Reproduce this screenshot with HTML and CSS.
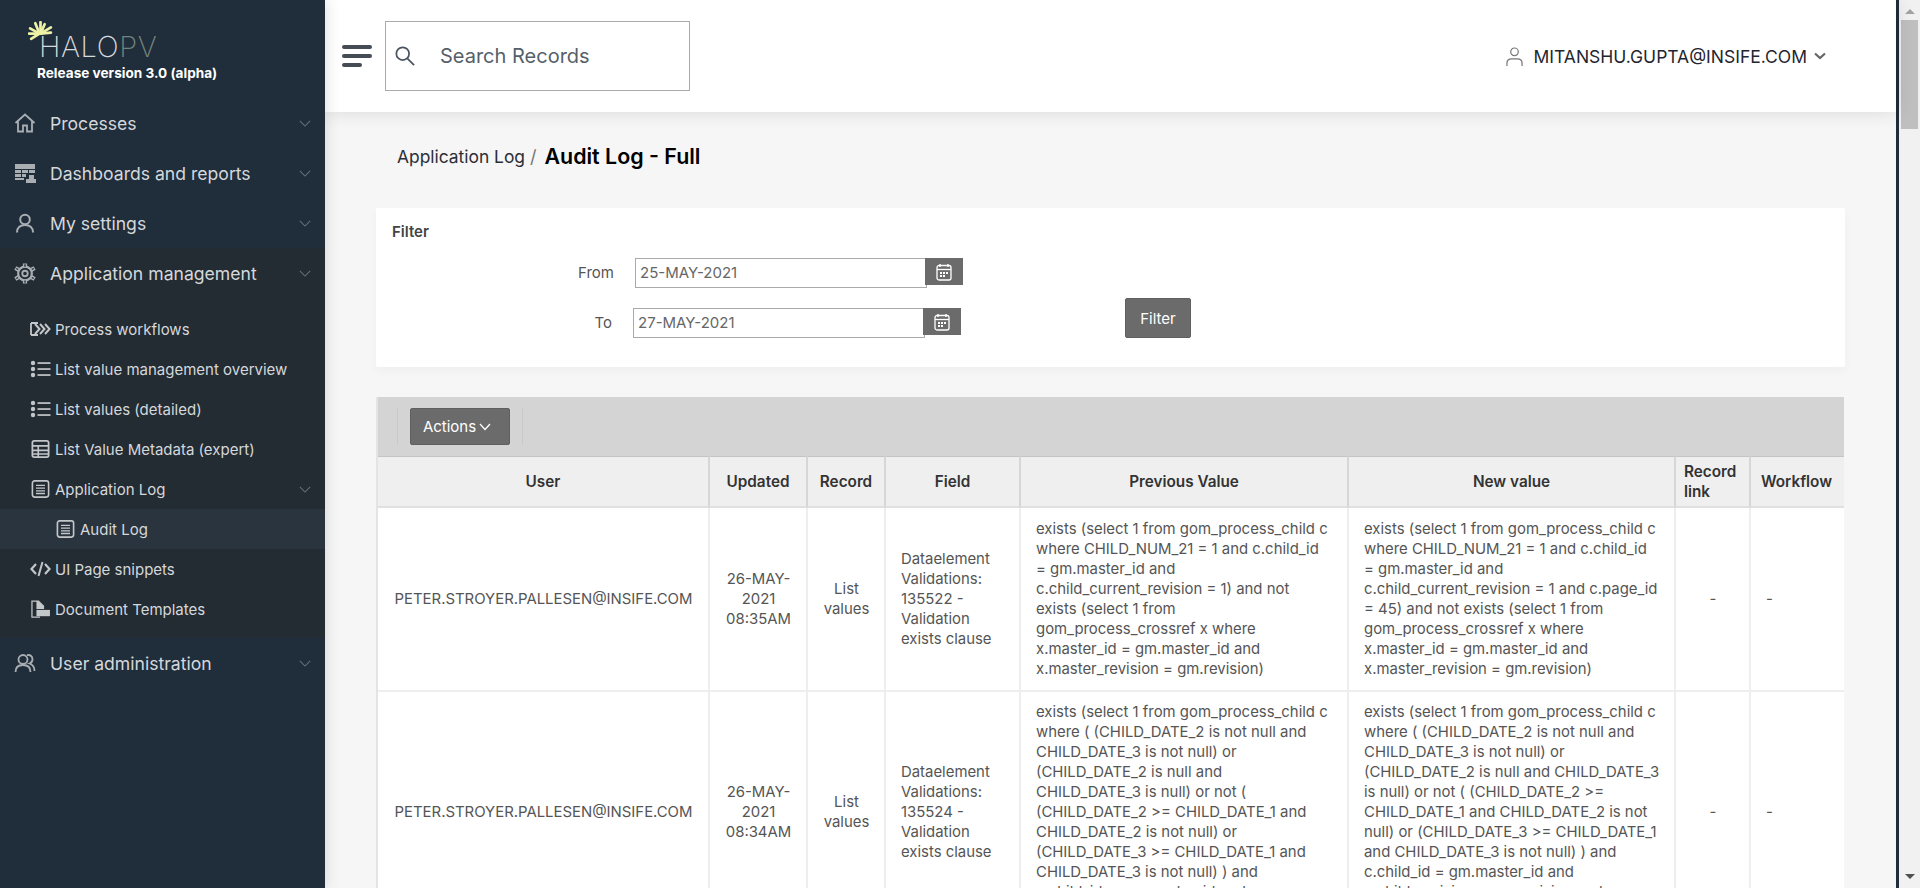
FILE: index.html
```html
<!DOCTYPE html>
<html lang="en">
<head>
    <meta charset="UTF-8">
    <meta name="viewport" content="width=device-width, initial-scale=1.0">
    <title>Audit Log - Full</title>
    <link rel="stylesheet" href="styles.css">
</head>
<body>
<svg class="defs" width="0" height="0">
    <symbol id="chev" viewBox="0 0 14 8"><path d="M1 1l6 6 6-6" fill="none" stroke="currentColor" stroke-width="1.2"/></symbol>
    <symbol id="list" viewBox="0 0 20 18"><g fill="currentColor"><circle cx="2.5" cy="3" r="2.2"/><circle cx="2.5" cy="9" r="2.2"/><circle cx="2.5" cy="15" r="2.2"/><rect x="7" y="2.2" width="13" height="1.7"/><rect x="7" y="8.2" width="13" height="1.7"/><rect x="7" y="14.2" width="13" height="1.7"/></g></symbol>
    <symbol id="log" viewBox="0 0 20 20"><rect x="1" y="1" width="18" height="18" rx="2.5" fill="none" stroke="currentColor" stroke-width="1.8"/><path d="M5 6h10M5 9h10M5 12h10M5 15h10" stroke="currentColor" stroke-width="1.5"/></symbol>
    <symbol id="cal" viewBox="0 0 16 18"><path d="M4 1v3M12 1v3" stroke="#fff" stroke-width="1.4"/><rect x="1" y="2.5" width="14" height="14.5" rx="2" fill="none" stroke="#fff" stroke-width="1.3"/><path d="M1 6.5h14" stroke="#fff" stroke-width="1.3"/><path d="M4 9h2v2H4zM7 9h2v2H7zM10 9h2v2h-2zM4 12h2v2H4zM7 12h2v2H7z" fill="#fff"/></symbol>
</svg>

<div class="app">
    <aside class="sidebar">
        <div class="brand">
            <svg class="sun" viewBox="0 0 24 20"><g stroke="#eef3a6" stroke-width="2.6" stroke-linecap="round"><path d="M11 12L2 7"/><path d="M11 12L1 12"/><path d="M11 12L3 17"/><path d="M11 12L7 2"/><path d="M12 12L12 1"/><path d="M12 12L16 3"/><path d="M12 12L22 6"/><path d="M12 12L22 11"/></g></svg>
            <div class="logo">HALO<span>PV</span></div>
            <div class="release">Release version 3.0 (alpha)</div>
        </div>

        <nav>
            <a class="nav-item">
                <svg class="nav-icon" viewBox="0 0 22 20"><path d="M1.5 10L11 1.5 20.5 10M4 8v10.5h5v-6h4v6h5V8" fill="none" stroke="currentColor" stroke-width="1.8"/></svg>
                <span>Processes</span>
                <svg class="chev"><use href="#chev"/></svg>
            </a>
            <a class="nav-item">
                <svg class="nav-icon" viewBox="0 0 22 20"><path d="M1 1h20v5H1zM1 7h6v3H1zM1 11h6v3H1zM1 15h9v2H1zM8 7h6v3H8zM8 11h4v3H8zM15 7h6v3h-6zM12 16h10v4H12zM15 12h5v5h-5z" fill="currentColor"/></svg>
                <span>Dashboards and reports</span>
                <svg class="chev"><use href="#chev"/></svg>
            </a>
            <a class="nav-item">
                <svg class="nav-icon" viewBox="0 0 22 20"><circle cx="11" cy="6.500" r="4.800" fill="none" stroke="currentColor" stroke-width="2"/><path d="M3 19.500c0-5 3.500-7.500 8-7.500s8 2.500 8 7.500" fill="none" stroke="currentColor" stroke-width="2"/></svg>
                <span>My settings</span>
                <svg class="chev"><use href="#chev"/></svg>
            </a>

            <div class="nav-group">
                <a class="nav-item">
                    <svg class="nav-icon gear" viewBox="0 0 24 24"><circle cx="12" cy="12" r="3" fill="none" stroke="currentColor" stroke-width="2"/><circle cx="12" cy="12" r="7.500" fill="none" stroke="currentColor" stroke-width="2.400"/><path d="M12 1v4.500M12 18.500V23M1.500 6l4 2.300M18.500 15.700l4 2.300M1.500 18l4-2.300M18.500 8.300l4-2.300" stroke="currentColor" stroke-width="4.600"/><path d="M12 2v2.500M12 19.500V22M2.500 6.500l2 1.200M19.500 16.300l2 1.200M2.500 17.500l2-1.200M19.500 7.700l2-1.200" stroke="#232b33" stroke-width="1.400"/></svg>
                    <span>Application management</span>
                    <svg class="chev"><use href="#chev"/></svg>
                </a>
                <div class="sub-list">
                    <a class="sub-item">
                        <svg class="sub-icon" viewBox="0 0 21 14"><path d="M1 1h7M1 13h7M1 1v12" fill="none" stroke="currentColor" stroke-width="1.800"/><path d="M5 2l4.500 5L5 12M10 2l4.500 5L10 12M15 2l4.500 5L15 12" fill="none" stroke="currentColor" stroke-width="2"/></svg>
                        <span>Process workflows</span>
                    </a>
                    <a class="sub-item"><svg class="sub-icon"><use href="#list"/></svg><span>List value management overview</span></a>
                    <a class="sub-item"><svg class="sub-icon"><use href="#list"/></svg><span>List values (detailed)</span></a>
                    <a class="sub-item">
                        <svg class="sub-icon" viewBox="0 0 20 20"><rect x="1" y="1" width="18" height="18" rx="2" fill="none" stroke="currentColor" stroke-width="2"/><path d="M1 6.500h18M1 11.500h18M1 15.500h18M7.500 6v13" stroke="currentColor" stroke-width="1.800"/></svg>
                        <span>List Value Metadata (expert)</span>
                    </a>
                    <a class="sub-item">
                        <svg class="sub-icon"><use href="#log"/></svg>
                        <span>Application Log</span>
                        <svg class="chev"><use href="#chev"/></svg>
                    </a>
                    <a class="sub-item sub-current"><svg class="sub-icon"><use href="#log"/></svg><span>Audit Log</span></a>
                    <a class="sub-item">
                        <svg class="sub-icon" viewBox="0 0 21 16"><path d="M6 3L1.500 8 6 13M15 3l4.500 5-4.500 5" fill="none" stroke="currentColor" stroke-width="2.200"/><path d="M12.500 1L8.500 15" stroke="currentColor" stroke-width="2"/></svg>
                        <span>UI Page snippets</span>
                    </a>
                    <a class="sub-item">
                        <svg class="sub-icon" viewBox="0 0 21 20"><path d="M9 1.200H1V19h9" fill="none" stroke="currentColor" stroke-width="1.400"/><path d="M9 1l5.500 5.500V10H6V1z" fill="currentColor"/><rect x="6" y="11" width="15" height="7" fill="currentColor"/></svg>
                        <span>Document Templates</span>
                    </a>
                </div>
            </div>

            <a class="nav-item">
                <svg class="nav-icon" viewBox="0 0 22 20"><circle cx="9" cy="6.500" r="4.500" fill="none" stroke="currentColor" stroke-width="1.800"/><path d="M1.500 19c0-5 3-7 7.500-7s7.500 2 7.500 7M13 2.200c3-.8 5.500 1 5.500 4 0 2.300-1.500 3.800-3 4.300 3 1 5 3 5 7.500" fill="none" stroke="currentColor" stroke-width="1.800"/></svg>
                <span>User administration</span>
                <svg class="chev"><use href="#chev"/></svg>
            </a>
        </nav>
    </aside>

    <div class="main">
        <header class="topbar">
            <div class="burger"><i></i><i></i><i></i></div>
            <div class="search">
                <svg class="search-icon" viewBox="0 0 22 22"><circle cx="8.500" cy="8.500" r="7" fill="none" stroke="#4b545e" stroke-width="1.900"/><path d="M13.500 13.500L21 21" stroke="#4b545e" stroke-width="1.900"/></svg>
                <span>Search Records</span>
            </div>
            <div class="user-menu">
                <svg class="user-icon" viewBox="0 0 18 20"><circle cx="9" cy="5" r="4" fill="none" stroke="#777" stroke-width="1.300"/><path d="M1 20v-3c0-3 2-4.500 5-4.500h6c3 0 5 1.500 5 4.500v3" fill="none" stroke="#777" stroke-width="1.300"/></svg>
                <span>MITANSHU.GUPTA@INSIFE.COM</span>
                <svg class="user-chev" viewBox="0 0 12 8"><path d="M1 1.500l5 4.500 5-4.500" fill="none" stroke="#666" stroke-width="2.200"/></svg>
            </div>
        </header>

        <div class="content">
            <div class="breadcrumb">
                <span class="crumb">Application Log</span>
                <span class="crumb-sep">/</span>
                <span class="crumb-now">Audit Log - Full</span>
            </div>

            <section class="filter-card">
                <h4>Filter</h4>
                <div class="filter-body">
                    <div class="filter-rows">
                        <div class="filter-row row-from">
                            <label>From</label>
                            <div class="date-input">25-MAY-2021</div>
                            <div class="date-btn"><svg viewBox="0 0 16 18"><use href="#cal"/></svg></div>
                        </div>
                        <div class="filter-row row-to">
                            <label>To</label>
                            <div class="date-input">27-MAY-2021</div>
                            <div class="date-btn"><svg viewBox="0 0 16 18"><use href="#cal"/></svg></div>
                        </div>
                    </div>
                    <button class="btn btn-filter">Filter</button>
                </div>
            </section>

            <section class="report">
                <div class="toolbar">
                    <div class="toolbar-group">
                        <button class="btn btn-actions">Actions <svg viewBox="0 0 12 8"><path d="M1 1l5 5.500L11 1" fill="none" stroke="#fff" stroke-width="1.300"/></svg></button>
                    </div>
                </div>
                <table>
                    <colgroup>
                        <col class="c-user"><col class="c-updated"><col class="c-record"><col class="c-field">
                        <col class="c-prev"><col class="c-new"><col class="c-link"><col class="c-flow">
                    </colgroup>
                    <thead>
                        <tr>
                            <th>User</th>
                            <th>Updated</th>
                            <th>Record</th>
                            <th>Field</th>
                            <th>Previous Value</th>
                            <th>New value</th>
                            <th class="th-link"><span>Record link</span></th>
                            <th class="th-flow">Workflow</th>
                        </tr>
                    </thead>
                    <tbody>
                        <tr>
                            <td class="center">PETER.STROYER.PALLESEN@INSIFE.COM</td>
                            <td class="center">26-MAY-2021 08:35AM</td>
                            <td class="center">List values</td>
                            <td>Dataelement Validations: 135522 - Validation exists clause</td>
                            <td class="sql">exists (select 1 from gom_process_child c<br>where CHILD_NUM_21 = 1 and c.child_id<br>= gm.master_id and<br>c.child_current_revision = 1) and not<br>exists (select 1 from<br>gom_process_crossref x where<br>x.master_id = gm.master_id and<br>x.master_revision = gm.revision)</td>
                            <td class="sql">exists (select 1 from gom_process_child c<br>where CHILD_NUM_21 = 1 and c.child_id<br>= gm.master_id and<br>c.child_current_revision = 1 and c.page_id<br>= 45) and not exists (select 1 from<br>gom_process_crossref x where<br>x.master_id = gm.master_id and<br>x.master_revision = gm.revision)</td>
                            <td class="center">-</td>
                            <td>-</td>
                        </tr>
                        <tr>
                            <td class="center">PETER.STROYER.PALLESEN@INSIFE.COM</td>
                            <td class="center">26-MAY-2021 08:34AM</td>
                            <td class="center">List values</td>
                            <td>Dataelement Validations: 135524 - Validation exists clause</td>
                            <td class="sql">exists (select 1 from gom_process_child c<br>where ( (CHILD_DATE_2 is not null and<br>CHILD_DATE_3 is not null) or<br>(CHILD_DATE_2 is null and<br>CHILD_DATE_3 is null) or not (<br>(CHILD_DATE_2 &gt;= CHILD_DATE_1 and<br>CHILD_DATE_2 is not null) or<br>(CHILD_DATE_3 &gt;= CHILD_DATE_1 and<br>CHILD_DATE_3 is not null) ) and<br>c.child_id = gm.master_id and<br>c.child_revision = gm.revision</td>
                            <td class="sql">exists (select 1 from gom_process_child c<br>where ( (CHILD_DATE_2 is not null and<br>CHILD_DATE_3 is not null) or<br>(CHILD_DATE_2 is null and CHILD_DATE_3<br>is null) or not ( (CHILD_DATE_2 &gt;=<br>CHILD_DATE_1 and CHILD_DATE_2 is not<br>null) or (CHILD_DATE_3 &gt;= CHILD_DATE_1<br>and CHILD_DATE_3 is not null) ) and<br>c.child_id = gm.master_id and<br>c.child_revision = gm.revision and<br>c.page_id = 45)</td>
                            <td class="center">-</td>
                            <td>-</td>
                        </tr>
                    </tbody>
                </table>
            </section>
        </div>
    </div>

    <div class="edge"></div>
    <div class="scrollbar">
        <div class="arrow-up"></div>
        <div class="thumb"></div>
        <div class="arrow-down"></div>
    </div>
</div>
</body>
</html>
```

FILE: styles.css
```css
* {
    box-sizing: border-box;
}

html, body {
    height: 100%;
    margin: 0;
    overflow: hidden;
}

body {
    font-family: 'Inter', 'Liberation Sans', sans-serif;
    font-size: 15px;
    color: #555;
    background-color: #f6f6f6;
}

.defs {
    position: absolute;
}

.app {
    display: flex;
    height: 888px;
    overflow: hidden;
}

/* sidebar */
.sidebar {
    width: 325px;
    flex-shrink: 0;
    background-color: #202d3b;
    color: #d5d8db;
    box-shadow: 0 0 14px rgba(0, 0, 0, 0.15);
    position: relative;
    z-index: 2;
}

.brand {
    height: 98px;
    padding: 22px 0 0 37px;
    position: relative;
}

.sun {
    position: absolute;
    left: 28px;
    top: 21px;
    width: 25px;
    height: 21px;
}

.logo {
    font-size: 29px;
    font-weight: 200;
    line-height: 30px;
    letter-spacing: 0.6px;
    padding: 10px 0 0 2px;
    color: #d6dadd;
}

.logo span {
    color: #74847d;
}

.release {
    font-size: 13.6px;
    font-weight: 700;
    line-height: 16px;
    color: #fff;
    margin-top: 3px;
}

.nav-item {
    display: flex;
    align-items: center;
    height: 50px;
    font-size: 17.6px;
    padding-left: 14px;
}

.nav-icon {
    width: 22px;
    height: 20px;
    color: #a9aeb3;
    margin-right: 14px;
    flex-shrink: 0;
}

.gear {
    height: 23px;
}

.chev {
    width: 12px;
    height: 7px;
    margin-left: auto;
    margin-right: 14px;
    color: #65707b;
    flex-shrink: 0;
}

.nav-group {
    background-color: #232b33;
}

.sub-list {
    padding-top: 11px;
    padding-bottom: 9px;
}

.sub-item {
    display: flex;
    align-items: center;
    height: 40px;
    font-size: 15px;
    padding-left: 30px;
}

.sub-icon {
    width: 21px;
    height: 18px;
    color: #c4c7ca;
    margin-right: 4px;
    flex-shrink: 0;
}

.sub-current {
    background-color: #2a343e;
    padding-left: 55px;
}

/* header */
.main {
    flex: 1;
    min-width: 0;
    display: flex;
    flex-direction: column;
}

.topbar {
    height: 112px;
    flex-shrink: 0;
    background-color: #fff;
    display: flex;
    align-items: center;
    padding-left: 17px;
    box-shadow: 0 0 18px rgba(0, 0, 0, 0.12);
    position: relative;
    z-index: 1;
}

.burger {
    width: 30px;
    margin-right: 13px;
}

.burger i {
    display: block;
    width: 30px;
    height: 4px;
    border-radius: 2px;
    background-color: #454c55;
    margin-bottom: 5px;
}

.burger i:last-child {
    width: 20px;
    margin-bottom: 0;
}

.search {
    width: 305px;
    height: 70px;
    border: 1px solid #aaa;
    display: flex;
    align-items: center;
    padding-left: 9px;
    font-size: 20px;
    color: #565f69;
}

.search-icon {
    width: 20px;
    height: 20px;
    margin-right: 25px;
}

.user-menu {
    margin-left: auto;
    margin-right: 70px;
    display: flex;
    align-items: center;
    font-size: 17.5px;
    color: #1f2630;
}

.user-icon {
    width: 17px;
    height: 19px;
    margin-right: 11px;
}

.user-chev {
    width: 12px;
    height: 8px;
    margin-left: 7px;
}

/* page */
.content {
    flex: 1;
    padding: 0 51px;
}

.breadcrumb {
    height: 96px;
    display: flex;
    align-items: center;
    padding-left: 21px;
    padding-bottom: 8px;
}

.crumb {
    font-size: 17.4px;
    color: #2b2f36;
}

.crumb-sep {
    font-size: 18px;
    color: #777;
    margin: 0 8px 0 5px;
}

.crumb-now {
    font-size: 21.4px;
    font-weight: 600;
    color: #000;
}

.filter-card {
    background-color: #fff;
    height: 159px;
    padding: 16px;
    border-radius: 2px;
    box-shadow: 0 4px 10px rgba(0, 0, 0, 0.03);
}

.filter-card h4 {
    margin: 0;
    font-size: 15px;
    font-weight: 600;
    line-height: 16px;
    color: #444;
}

.filter-body {
    display: flex;
    align-items: flex-end;
    margin-top: 18px;
}

.filter-row {
    display: flex;
    align-items: flex-start;
    height: 30px;
}

.row-to {
    margin-top: 20px;
}

.filter-row label {
    width: 80px;
    text-align: right;
    line-height: 30px;
    margin-right: 21px;
    flex-shrink: 0;
    color: #555;
}

.row-from label {
    margin-left: 142px;
}

.row-to label {
    margin-left: 140px;
}

.date-input {
    width: 292px;
    height: 30px;
    border: 1px solid #aaa;
    line-height: 28px;
    padding-left: 4px;
    color: #666;
}

.date-btn {
    width: 38px;
    height: 27px;
    margin-left: -2px;
    position: relative;
    background-color: #6b6b6b;
    display: flex;
    align-items: center;
    justify-content: center;
}

.date-btn svg {
    width: 16px;
    height: 18px;
}

.btn {
    font-family: inherit;
    font-size: 15px;
    color: #fff;
    background-color: #6b6b6b;
    border: 1px solid #5f5f5f;
    border-radius: 2px;
    padding: 0;
}

.btn-filter {
    width: 66px;
    height: 40px;
    margin-left: 162px;
}

.report {
    margin-top: 30px;
    border-left: 2px solid #e4e4e4;
    width: 1468px;
}

.toolbar {
    height: 59px;
    background-color: #d4d4d4;
    padding: 11px 0 0 19px;
}

.toolbar-group {
    display: inline-flex;
    height: 37px;
    padding: 0 12px;
    border-left: 1px solid #c9c9c9;
    border-right: 1px solid #c9c9c9;
}

.btn-actions {
    width: 100px;
    height: 37px;
    display: flex;
    align-items: center;
    justify-content: center;
    gap: 3px;
    padding-right: 6px;
}

.btn-actions svg {
    width: 12px;
    height: 8px;
}

table {
    width: 1466px;
    table-layout: fixed;
    border-collapse: separate;
    border-spacing: 0;
    background-color: #fff;
}

.c-user { width: 332px; }
.c-updated { width: 98px; }
.c-record { width: 78px; }
.c-field { width: 135px; }
.c-prev { width: 328px; }
.c-new { width: 327px; }
.c-link { width: 75px; }
.c-flow { width: 93px; }

th {
    height: 52px;
    background-color: #efefef;
    border-top: 1px solid #c4c4c4;
    border-right: 2px solid #d6d6d6;
    border-bottom: 2px solid #e0e0e0;
    font-size: 15.3px;
    font-weight: 600;
    line-height: 20px;
    color: #333;
    padding: 0 8px;
}

.th-link span {
    display: inline-block;
    text-align: left;
}

.th-flow {
    padding-right: 10px;
}

th:last-child,
td:last-child {
    border-right: 0;
}

td {
    border-right: 2px solid #eee;
    border-bottom: 2px solid #eee;
    font-size: 14.9px;
    line-height: 20px;
    padding: 10px 14px 10px 15px;
    color: #555;
    overflow-wrap: break-word;
}

tbody tr:first-child td {
    padding-top: 11px;
    padding-bottom: 11px;
}

td.sql {
    padding-right: 4px;
    white-space: nowrap;
}

.center {
    text-align: center;
}

/* scrollbar */
.edge {
    width: 3px;
    flex-shrink: 0;
    background-color: #202d3b;
}

.scrollbar {
    width: 21px;
    flex-shrink: 0;
    background-color: #f1f1f1;
    padding: 0 2px;
    display: flex;
    flex-direction: column;
    position: relative;
}

.arrow-up {
    width: 0;
    margin: 9px auto 6px;
    border-left: 5px solid transparent;
    border-right: 5px solid transparent;
    border-bottom: 5px solid #a3a3a3;
}

.thumb {
    height: 109px;
    background-color: #bfbfbf;
}

.arrow-down {
    width: 0;
    margin: auto auto 9px;
    border-left: 5px solid transparent;
    border-right: 5px solid transparent;
    border-top: 5px solid #505050;
}
```
